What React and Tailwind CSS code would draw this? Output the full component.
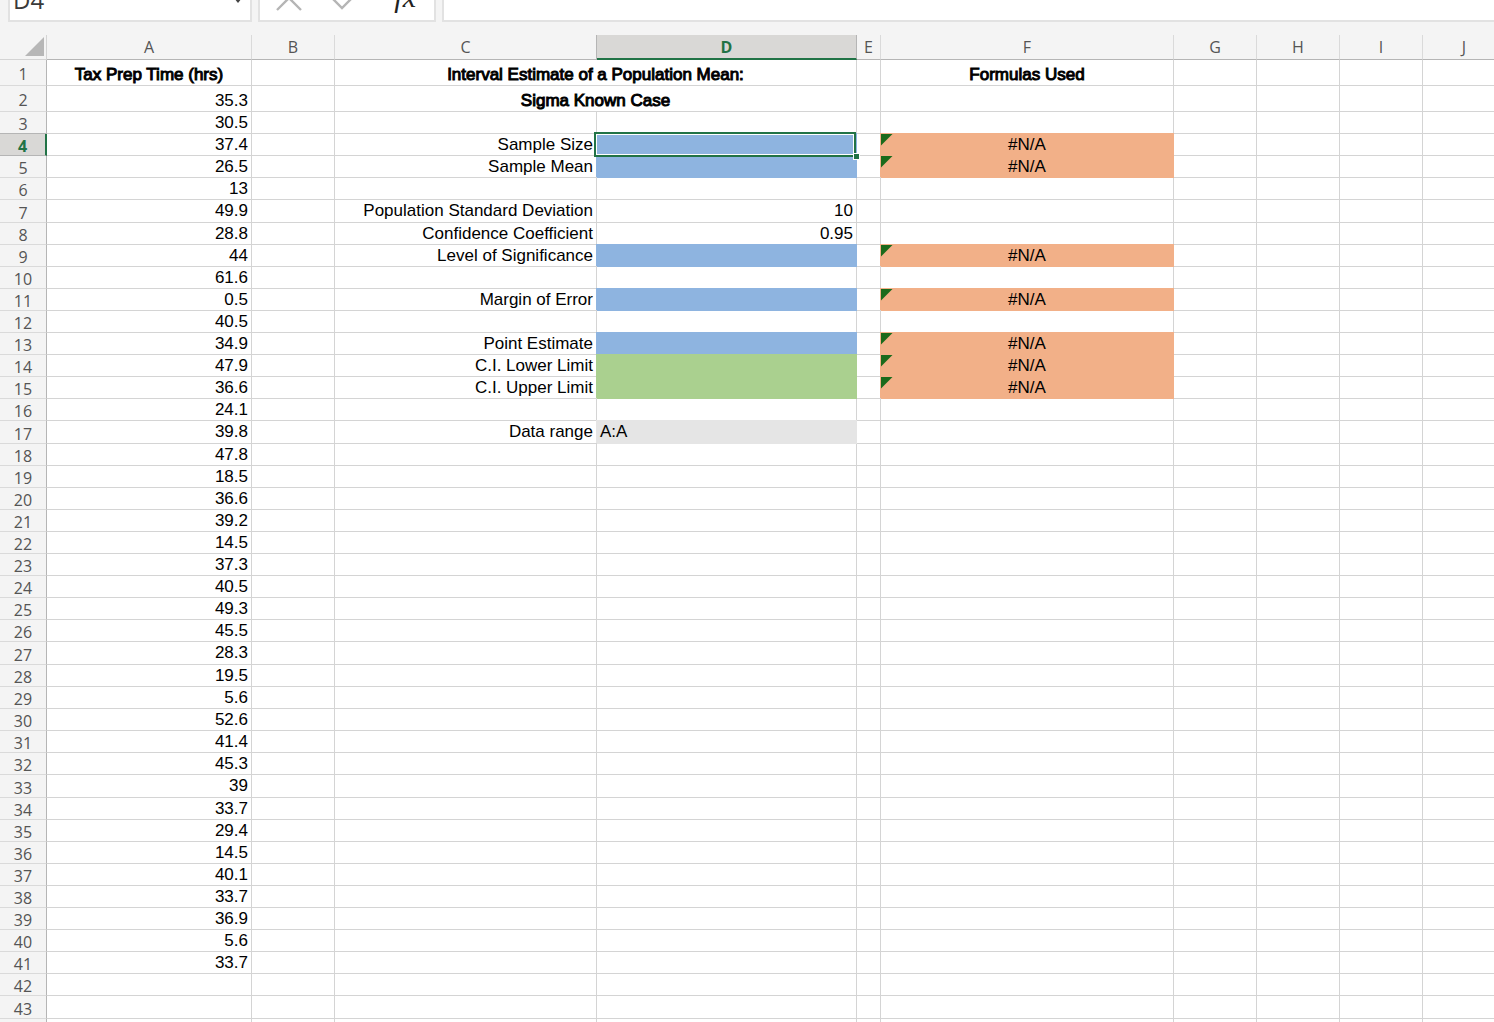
import { useState } from "react";
import clsx from "clsx";

const columns = [
  { id: 'A', width: 'w-[205px]' },
  { id: 'B', width: 'w-[83px]' },
  { id: 'C', width: 'w-[262px]' },
  { id: 'D', width: 'w-[260px]' },
  { id: 'E', width: 'w-[24px]' },
  { id: 'F', width: 'w-[293px]' },
  { id: 'G', width: 'w-[83px]' },
  { id: 'H', width: 'w-[83px]' },
  { id: 'I', width: 'w-[83px]' },
  { id: 'J', width: 'w-[83px]' },
];

const rows = Array.from({ length: 43 }, (_, i) => i + 1);

const hours = [
  35.3, 30.5, 37.4, 26.5, 13, 49.9, 28.8, 44, 61.6, 0.5, 40.5, 34.9, 47.9, 36.6,
  24.1, 39.8, 47.8, 18.5, 36.6, 39.2, 14.5, 37.3, 40.5, 49.3, 45.5, 28.3, 19.5,
  5.6, 52.6, 41.4, 45.3, 39, 33.7, 29.4, 14.5, 40.1, 33.7, 36.9, 5.6, 33.7,
];

const cells = {
  A1: { text: 'Tax Prep Time (hrs)', align: 'center', bold: true },
  C1: { text: 'Interval Estimate of a Population Mean:', align: 'center', bold: true, span: 2 },
  C2: { text: 'Sigma Known Case', align: 'center', bold: true, span: 2 },
  F1: { text: 'Formulas Used', align: 'center', bold: true },
  C4: { text: 'Sample Size' },
  C5: { text: 'Sample Mean' },
  C7: { text: 'Population Standard Deviation' },
  C8: { text: 'Confidence Coefficient' },
  C9: { text: 'Level of Significance' },
  C11: { text: 'Margin of Error' },
  C13: { text: 'Point Estimate' },
  C14: { text: 'C.I. Lower Limit' },
  C15: { text: 'C.I. Upper Limit' },
  C17: { text: 'Data range' },
  D4: { fill: 'blue' },
  D5: { fill: 'blue' },
  D7: { text: '10' },
  D8: { text: '0.95' },
  D9: { fill: 'blue' },
  D11: { fill: 'blue' },
  D13: { fill: 'blue' },
  D14: { fill: 'green' },
  D15: { fill: 'green' },
  D17: { text: 'A:A', align: 'left', fill: 'gray' },
};

hours.forEach((h, i) => {
  cells[`A${i + 2}`] = { text: String(h) };
});

[4, 5, 9, 11, 13, 14, 15].forEach(r => {
  cells[`F${r}`] = { text: '#N/A', align: 'center', fill: 'orange', error: true };
});

// a filled cell also covers the grid lines above it and to its left
const fills = {
  blue: 'bg-[#8eb4e0] border-[#8eb4e0] shadow-[-1px_-1px_0_#8eb4e0,0_-1px_0_#8eb4e0]',
  green: 'bg-[#aad08f] border-[#aad08f] shadow-[-1px_-1px_0_#aad08f,0_-1px_0_#aad08f]',
  gray: 'bg-[#e5e5e5] border-[#e5e5e5] shadow-[-1px_-1px_0_#e5e5e5,0_-1px_0_#e5e5e5]',
  orange: 'bg-[#f2b088] border-[#f2b088] shadow-[-1px_-1px_0_#f2b088,0_-1px_0_#f2b088]',
};

const aligns = { left: 'text-left', center: 'text-center', right: 'text-right' };

const rowHeight = row => {
  if (row <= 2) return 'h-[26px]';
  return [7, 17, 27, 33, 43].includes(row) ? 'h-[23px]' : 'h-[22px]';
};

function Selection() {
  return (
    <>
      <span className="pointer-events-none absolute -top-[2px] right-0 -bottom-[2px] -left-[3px] z-10 border-2 border-[#217346] shadow-[inset_0_0_0_1px_#fff]" />
      <span className="absolute -right-[3px] -bottom-[4px] z-20 size-[5px] bg-[#217346] shadow-[0_0_0_1px_#fff]" />
    </>
  );
}

function Cell({ id, cell = {}, row, selected, onSelect }) {
  return (
    <td
      colSpan={cell.span}
      onClick={() => onSelect(id)}
      className={clsx(
        'relative border-r border-b px-[3px] leading-[20px] whitespace-nowrap text-black',
        aligns[cell.align || 'right'],
        cell.fill ? fills[cell.fill] : 'border-[#d4d4d4]',
        cell.bold && '[-webkit-text-stroke:1px_black]',
        row <= 2 && 'pt-[5px]'
      )}
    >
      {cell.error && (
        <svg className="absolute top-0 left-0 size-3" viewBox="0 0 12 12" aria-hidden="true">
          <path d="M0 0H11.5L0 11.5Z" fill="#1b6a1b" />
        </svg>
      )}
      {cell.text}
      {selected && <Selection />}
    </td>
  );
}

function FormulaBar({ name }) {
  return (
    <div className="flex h-[22px] items-end gap-[6px] overflow-hidden pl-2">
      <div className="flex h-10 w-[244px] shrink-0 items-center justify-between border-2 border-[#e2e2e2] bg-white pr-2 pb-[4px] pl-[3px]">
        <input
          aria-label="Name box"
          value={name}
          readOnly
          className="h-7 w-40 bg-transparent font-['Open_Sans','Noto_Sans',sans-serif] text-[24px] leading-7 font-medium text-[#3a3a3a] outline-none"
        />
        <button aria-label="Open name list">
          <svg width="8" height="5" viewBox="0 0 8 5"><path d="M0 0H8L4 5Z" fill="#444" /></svg>
        </button>
      </div>

      <div className="flex h-10 w-[178px] shrink-0 items-center border-2 border-[#e2e2e2] bg-white pr-[18px] pb-[4px] pl-4">
        <button aria-label="Cancel">
          <svg width="26" height="26" viewBox="0 0 26 26" fill="none" stroke="#b5b5b5" strokeWidth="2.4">
            <path d="M2 0L25 23M24 0L1 23" />
          </svg>
        </button>
        <button aria-label="Enter" className="ml-[27px]">
          <svg width="26" height="26" viewBox="0 0 26 26" fill="none" stroke="#b5b5b5" strokeWidth="2.4">
            <path d="M2 10L13 21L24 10" />
          </svg>
        </button>
        <button
          aria-label="Insert function"
          className="ml-auto pb-[6px] font-['Liberation_Serif',serif] text-[30px] leading-7 text-[#222] italic"
        >
          fx
        </button>
      </div>

      <input
        aria-label="Formula"
        className="h-10 min-w-0 flex-1 border-2 border-r-0 border-[#e2e2e2] bg-white px-2 outline-none"
      />
    </div>
  );
}

export default function App() {
  const [active, setActive] = useState('D4');
  const activeCol = active[0];
  const activeRow = Number(active.slice(1));

  return (
    <div className="flex h-screen w-full flex-col overflow-hidden bg-[#f4f4f4]">
      <FormulaBar name={active} />

      {/* Sheet */}
      <div className="mt-[13px] min-h-0 flex-1 overflow-hidden">
        <table className="w-max table-fixed border-separate border-spacing-0 bg-white font-['Liberation_Sans',Arial,sans-serif] text-[17px]">
          <colgroup>
            <col className="w-[47px]" />
            {columns.map(c => <col key={c.id} className={c.width} />)}
          </colgroup>
          <thead className="bg-[#f4f4f4] font-['Open_Sans','Noto_Sans',sans-serif] text-[16px] text-[#555]">
            <tr className="h-[25px]">
              <td className="border-r border-b border-r-[#d4d4d4] border-b-[#d4d4d4] px-0 pt-0 pb-[2px]">
                <svg className="mr-[2px] ml-auto block" width="19" height="19" viewBox="0 0 19 19" aria-hidden="true">
                  <path d="M19 0V19H0Z" fill="#b7b7b7" />
                </svg>
              </td>
              {columns.map(c => (
                <th
                  key={c.id}
                  scope="col"
                  className={clsx(
                    'border-r p-0 text-center leading-[22px]',
                    c.id === activeCol
                      ? 'border-b-2 border-r-[#b5b5b5] border-b-[#217346] bg-[#d9d8d6] font-bold text-[#217346] shadow-[-1px_0_0_#b5b5b5]'
                      : 'border-b border-r-[#dadada] border-b-[#b5b5b5] font-normal'
                  )}
                >
                  {c.id}
                </th>
              ))}
            </tr>
          </thead>
          <tbody>
            {rows.map(row => (
              <tr key={row} className={rowHeight(row)}>
                <th
                  scope="row"
                  className={clsx(
                    "border-b px-0 pt-[3px] pb-0 text-center font-['Open_Sans','Noto_Sans',sans-serif] text-[16px] leading-[18px]",
                    row === activeRow
                      ? 'border-r-2 border-r-[#217346] border-b-[#b5b5b5] bg-[#d9d8d6] font-bold text-[#217346] shadow-[0_-1px_0_#b5b5b5]'
                      : 'border-r border-r-[#b5b5b5] border-b-[#dadada] bg-[#f4f4f4] font-normal text-[#555]'
                  )}
                >
                  {row}
                </th>
                {columns.map((c, i) => {
                  const prev = i > 0 && cells[columns[i - 1].id + row];
                  if (prev && prev.span) return null;
                  const id = c.id + row;
                  return (
                    <Cell key={id} id={id} cell={cells[id]} row={row} selected={id === active} onSelect={setActive} />
                  );
                })}
              </tr>
            ))}
            <tr className="h-[22px]" aria-hidden="true">
              <td className="border-r border-r-[#b5b5b5] bg-[#f4f4f4]" />
              {columns.map(c => <td key={c.id} className="border-r border-[#d4d4d4]" />)}
            </tr>
          </tbody>
        </table>
      </div>
    </div>
  );
}
